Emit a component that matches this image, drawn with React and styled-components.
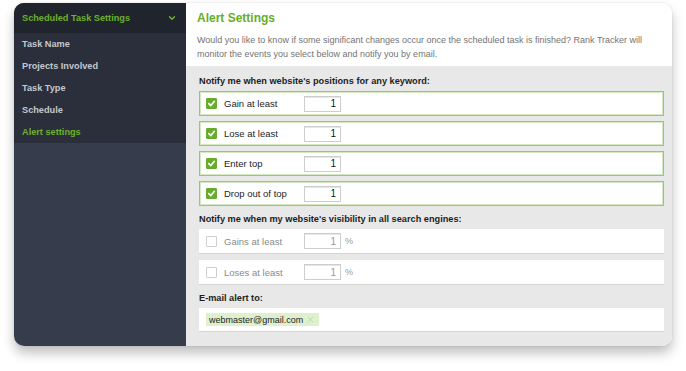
import React from "react";
import styled, { createGlobalStyle } from "styled-components";
import { ChevronDown, X } from "lucide-react";

const GlobalStyle = createGlobalStyle`
  body {
    margin: 0;
    background: #fff;
    font-family: "Liberation Sans", Arial, sans-serif;
  }
`;

const menu = ["Task Name", "Projects Involved", "Task Type", "Schedule", "Alert settings"];

const positionRules = [
  { label: "Gain at least", value: 1 },
  { label: "Lose at least", value: 1 },
  { label: "Enter top", value: 1 },
  { label: "Drop out of top", value: 1 },
];

const visibilityRules = [
  { label: "Gains at least", value: 1 },
  { label: "Loses at least", value: 1 },
];

const Check = ({ checked }) => (
  <Box $checked={checked}>
    {checked && (
      <svg width="9" height="9" viewBox="0 0 10 10">
        <path d="M2 5.2 L4.2 7.3 L8 2.8" fill="none" stroke="#fff" strokeWidth="1.9" strokeLinecap="round" strokeLinejoin="round" />
      </svg>
    )}
  </Box>
);

const App = () => {
  return (
    <>
      <GlobalStyle />
      <Page>
        <Window>
          <Sidebar>
            <SideHeader>
              Scheduled Task Settings
              <ChevronDown size={10} strokeWidth={3.5} color="#6cb02e" />
            </SideHeader>
            <SideList>
              {menu.map((item, i) => (
                <SideItem key={item} $active={i === menu.length - 1}>{item}</SideItem>
              ))}
            </SideList>
          </Sidebar>

          <Main>
            <Intro>
              <Title>Alert Settings</Title>
              <Description>
                Would you like to know if some significant changes occur once the scheduled task is finished? Rank Tracker will
                <br />
                monitor the events you select below and notify you by email.
              </Description>
            </Intro>

            <Settings>
              <Heading>Notify me when website's positions for any keyword:</Heading>
              <Rows $gap={5}>
                {positionRules.map((r) => (
                  <Row key={r.label} $active>
                    <Check checked />
                    <RowLabel $active>{r.label}</RowLabel>
                    <NumberField $active>{r.value}</NumberField>
                  </Row>
                ))}
              </Rows>

              <Heading>Notify me when my website's visibility in all search engines:</Heading>
              <Rows $gap={6}>
                {visibilityRules.map((r) => (
                  <Row key={r.label}>
                    <Check />
                    <RowLabel>{r.label}</RowLabel>
                    <NumberField>{r.value}</NumberField>
                    <Unit>%</Unit>
                  </Row>
                ))}
              </Rows>

              <Heading>E-mail alert to:</Heading>
              <EmailBox>
                <Tag>
                  webmaster@gmail.com
                  <X size={9} strokeWidth={1.5} color="#b5b5b5" />
                </Tag>
              </EmailBox>
            </Settings>
          </Main>
        </Window>
      </Page>
    </>
  );
};

const Page = styled.div`
  width: 686px;
  height: 371px;
  box-sizing: border-box;
  padding: 3px 14px 0 14px;
`;

const Window = styled.div`
  display: flex;
  height: 343px;
  border-radius: 10px;
  overflow: hidden;
  box-shadow: 0 7px 12px rgba(0, 0, 0, 0.25), 0 0 2px rgba(0, 0, 0, 0.12);
`;

const Sidebar = styled.div`
  width: 172px;
  flex-shrink: 0;
  display: flex;
  flex-direction: column;
  background: #363c4b;
`;

const SideHeader = styled.div`
  height: 30px;
  display: flex;
  align-items: center;
  justify-content: space-between;
  padding: 0 9px 0 8px;
  background: #20242d;
  color: #6cb02e;
  font-size: 9.2px;
  font-weight: 700;
`;

const SideList = styled.div`
  background: #2a2f3b;
`;

const SideItem = styled.div`
  height: 22px;
  display: flex;
  align-items: center;
  padding-left: 8px;
  font-size: 9.2px;
  font-weight: 700;
  color: ${(p) => (p.$active ? "#6cb02e" : "#c3c7ce")};
`;

const Main = styled.div`
  flex: 1;
  display: flex;
  flex-direction: column;
  background: #fff;
`;

const Intro = styled.div`
  padding: 7px 12px 5px 11px;
`;

const Title = styled.div`
  font-size: 12px;
  line-height: 16px;
  font-weight: 700;
  color: #68ad2a;
  margin-bottom: 7px;
`;

const Description = styled.div`
  font-size: 9px;
  line-height: 14px;
  color: #747474;
  white-space: nowrap;
`;

const Settings = styled.div`
  flex: 1;
  background: #e8e8e8;
  padding: 2px 8px 0 13px;
`;

const Heading = styled.div`
  padding: 6px 0 3px;
  font-size: 9.2px;
  line-height: 14px;
  font-weight: 700;
  color: #1e1e1e;
`;

const Rows = styled.div`
  display: flex;
  flex-direction: column;
  gap: ${(p) => p.$gap}px;
`;

const Row = styled.div`
  height: 25px;
  box-sizing: border-box;
  display: flex;
  align-items: center;
  background: #fff;
  border: ${(p) => (p.$active ? "1px solid #97c96c" : "none")};
  border-bottom: 1px solid ${(p) => (p.$active ? "#97c96c" : "#d4d4d4")};
  box-shadow: ${(p) => (p.$active ? "inset 0 0 0 1px #d3eac0" : "none")};
  padding-left: ${(p) => (p.$active ? "6px" : "7px")};
`;

const Box = styled.div`
  width: 11px;
  height: 11px;
  box-sizing: border-box;
  display: flex;
  align-items: center;
  justify-content: center;
  border-radius: 1px;
  background: ${(p) => (p.$checked ? "#67ad2b" : "#fff")};
  border: 1px solid ${(p) => (p.$checked ? "#67ad2b" : "#cfcfcf")};
`;

const RowLabel = styled.div`
  width: 80px;
  margin-left: 7px;
  font-size: 9.5px;
  color: ${(p) => (p.$active ? "#1e1e1e" : "#8a8a8a")};
`;

const NumberField = styled.div`
  width: 37px;
  height: 16px;
  box-sizing: border-box;
  display: flex;
  align-items: center;
  justify-content: flex-end;
  padding-right: 4px;
  background: #fff;
  border: 1px solid #cdcdcd;
  box-shadow: inset 0 1px 0 #e6e6e6;
  font-size: 10px;
  color: ${(p) => (p.$active ? "#111" : "#999")};
`;

const Unit = styled.span`
  margin-left: 4px;
  font-size: 9px;
  color: #999;
`;

const EmailBox = styled.div`
  height: 24px;
  box-sizing: border-box;
  display: flex;
  align-items: center;
  padding-left: 7px;
  background: #fff;
  border-bottom: 1px solid #d4d4d4;
`;

const Tag = styled.div`
  height: 13px;
  display: flex;
  align-items: center;
  gap: 3px;
  padding: 0 4px 0 3px;
  background: #dff0cf;
  font-size: 9px;
  color: #222;
`;

export default App;
